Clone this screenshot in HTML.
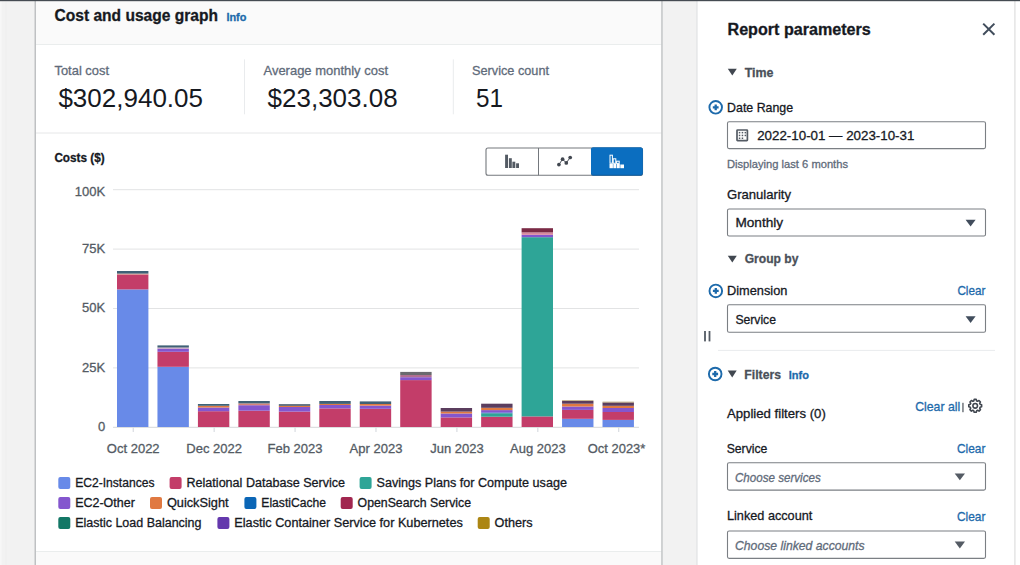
<!DOCTYPE html>
<html><head><meta charset="utf-8"><title>Cost and usage graph</title>
<style>
html,body{margin:0;padding:0;width:1020px;height:565px;overflow:hidden;background:#f2f2f2;}
svg{display:block;font-family:"Liberation Sans", sans-serif;}
</style></head><body>
<svg width="1020" height="565" viewBox="0 0 1020 565">
<rect x="0" y="0" width="1020" height="565" fill="#f2f2f2"/>
<rect x="0" y="0" width="1.5" height="565" fill="#f7f7f7"/>
<rect x="5.5" y="0" width="1" height="565" fill="#eeeeee"/>
<rect x="35" y="0" width="627" height="565" fill="#ffffff"/>
<rect x="35" y="0" width="627" height="45" fill="#fafafa"/>
<line x1="35" y1="44.5" x2="662" y2="44.5" stroke="#eaeded" stroke-width="1"/>
<line x1="35" y1="133" x2="662" y2="133" stroke="#e6e7e8" stroke-width="1"/>
<rect x="35" y="552" width="627" height="13" fill="#fafafa"/>
<line x1="35" y1="551.5" x2="662" y2="551.5" stroke="#eaeded" stroke-width="1"/>
<rect x="34.5" y="0" width="1.5" height="565" fill="#bfc1c3"/>
<rect x="661.2" y="0" width="1.5" height="565" fill="#c4c6c8"/>
<rect x="697" y="0" width="323" height="565" fill="#ffffff"/>
<rect x="696.5" y="0" width="1" height="565" fill="#dcdedf"/>
<rect x="1014.3" y="0" width="1.2" height="565" fill="#dedede"/>
<rect x="0" y="0" width="1020" height="1.2" fill="#454b52"/>
<text x="54.5" y="20.8" font-size="16" fill="#16191f" stroke="#16191f" stroke-width="0.3" font-weight="700" textLength="163.5" lengthAdjust="spacingAndGlyphs">Cost and usage graph</text>
<text x="226.4" y="21" font-size="11.5" fill="#1d6aab" stroke="#1d6aab" stroke-width="0.3" font-weight="700" textLength="20" lengthAdjust="spacingAndGlyphs">Info</text>
<text x="54.5" y="74.5" font-size="13" fill="#5f6b7a" stroke="#5f6b7a" stroke-width="0.3" textLength="54.5" lengthAdjust="spacingAndGlyphs">Total cost</text>
<text x="58.4" y="107" font-size="26" fill="#16191f" textLength="144.6" lengthAdjust="spacingAndGlyphs">$302,940.05</text>
<line x1="244.5" y1="59.4" x2="244.5" y2="114.3" stroke="#e9ebed" stroke-width="1"/>
<text x="263.5" y="74.5" font-size="13" fill="#5f6b7a" stroke="#5f6b7a" stroke-width="0.3" textLength="124.5" lengthAdjust="spacingAndGlyphs">Average monthly cost</text>
<text x="267.6" y="107" font-size="26" fill="#16191f" textLength="130" lengthAdjust="spacingAndGlyphs">$23,303.08</text>
<line x1="453.3" y1="59.4" x2="453.3" y2="114.3" stroke="#e9ebed" stroke-width="1"/>
<text x="472" y="74.5" font-size="13" fill="#5f6b7a" stroke="#5f6b7a" stroke-width="0.3" textLength="77" lengthAdjust="spacingAndGlyphs">Service count</text>
<text x="476" y="107" font-size="26" fill="#16191f" textLength="27" lengthAdjust="spacingAndGlyphs">51</text>
<text x="54.4" y="161.8" font-size="12.5" fill="#16191f" stroke="#16191f" stroke-width="0.3" font-weight="700" textLength="50.2" lengthAdjust="spacingAndGlyphs">Costs ($)</text>
<rect x="486" y="148" width="156.5" height="27.3" fill="#ffffff" rx="2" stroke="#74787d" stroke-width="1.1"/>
<rect x="591" y="147.5" width="51.7" height="28.3" fill="#0a5a9c" rx="2"/>
<rect x="591" y="147.5" width="51.7" height="27.3" fill="#0b6ec0" rx="2"/>
<line x1="538.5" y1="148" x2="538.5" y2="175.3" stroke="#74787d" stroke-width="1"/>
<rect x="505.1" y="154.7" width="2.9" height="13.300000000000011" fill="#545b64"/>
<rect x="508.9" y="158.2" width="2.9" height="9.800000000000011" fill="#545b64"/>
<rect x="512.4" y="161.7" width="2.9" height="6.300000000000011" fill="#545b64"/>
<rect x="516.1" y="163.3" width="2.9" height="4.699999999999989" fill="#545b64"/>
<polyline points="558.9,164.6 562.6,159.2 566.3,162.9 570.2,157.5" fill="none" stroke="#414750" stroke-width="0.95"/>
<circle cx="558.9" cy="164.6" r="1.85" fill="#414750"/>
<circle cx="562.6" cy="159.2" r="1.85" fill="#414750"/>
<circle cx="566.3" cy="162.9" r="1.85" fill="#414750"/>
<circle cx="570.2" cy="157.5" r="1.85" fill="#414750"/>
<g fill="none" stroke="#ffffff" stroke-width="1"><rect x="610" y="155.2" width="2.4" height="8"/><rect x="613.2" y="158.8" width="2.6" height="4.5"/><rect x="616.6" y="161.2" width="2.6" height="2.2"/></g>
<g fill="#ffffff"><rect x="609.5" y="163.8" width="3.4" height="4.4"/><rect x="613.3" y="163.8" width="3.0" height="4.4"/><rect x="616.8" y="163.8" width="3.0" height="4.4"/><rect x="620.3" y="164.5" width="3.7" height="3.7"/></g>
<line x1="113" y1="189.7" x2="639" y2="189.7" stroke="#e2e3e4" stroke-width="1"/>
<line x1="113" y1="249.1" x2="639" y2="249.1" stroke="#e2e3e4" stroke-width="1"/>
<line x1="113" y1="308.5" x2="639" y2="308.5" stroke="#e2e3e4" stroke-width="1"/>
<line x1="113" y1="367.9" x2="639" y2="367.9" stroke="#e2e3e4" stroke-width="1"/>
<line x1="113" y1="427.3" x2="639" y2="427.3" stroke="#d5d7d9" stroke-width="1"/>
<text x="105.2" y="196.2" font-size="13" fill="#545b64" stroke="#545b64" stroke-width="0.3" text-anchor="end">100K</text>
<text x="105.2" y="252.8" font-size="13" fill="#545b64" stroke="#545b64" stroke-width="0.3" text-anchor="end">75K</text>
<text x="105.2" y="312.2" font-size="13" fill="#545b64" stroke="#545b64" stroke-width="0.3" text-anchor="end">50K</text>
<text x="105.2" y="371.6" font-size="13" fill="#545b64" stroke="#545b64" stroke-width="0.3" text-anchor="end">25K</text>
<text x="105.2" y="431.0" font-size="13" fill="#545b64" stroke="#545b64" stroke-width="0.3" text-anchor="end">0</text>
<rect x="117.0" y="289.4" width="31.4" height="137.6" fill="#688ae8"/>
<rect x="117.0" y="274.5" width="31.4" height="14.9" fill="#c33d69"/>
<rect x="117.0" y="273.6" width="31.4" height="0.9" fill="#d98c7a"/>
<rect x="117.0" y="271" width="31.4" height="2.6" fill="#3f6176"/>
<rect x="157.46" y="366.8" width="31.4" height="60.2" fill="#688ae8"/>
<rect x="157.46" y="351.8" width="31.4" height="15.0" fill="#c33d69"/>
<rect x="157.46" y="348.6" width="31.4" height="3.2" fill="#8456ce"/>
<rect x="157.46" y="347.5" width="31.4" height="1.1" fill="#c9a0b8"/>
<rect x="157.46" y="345.4" width="31.4" height="2.1" fill="#3f6176"/>
<rect x="197.92" y="411.2" width="31.4" height="15.8" fill="#c33d69"/>
<rect x="197.92" y="407.5" width="31.4" height="3.7" fill="#8456ce"/>
<rect x="197.92" y="405.8" width="31.4" height="1.7" fill="#e07941"/>
<rect x="197.92" y="404" width="31.4" height="1.8" fill="#3f6176"/>
<rect x="238.38" y="410.7" width="31.4" height="16.3" fill="#c33d69"/>
<rect x="238.38" y="405.2" width="31.4" height="5.5" fill="#8456ce"/>
<rect x="238.38" y="403.4" width="31.4" height="1.8" fill="#d8847a"/>
<rect x="238.38" y="401" width="31.4" height="2.4" fill="#3f6176"/>
<rect x="278.84" y="411.6" width="31.4" height="15.4" fill="#c33d69"/>
<rect x="278.84" y="407.0" width="31.4" height="4.6" fill="#8456ce"/>
<rect x="278.84" y="405.8" width="31.4" height="1.2" fill="#e07941"/>
<rect x="278.84" y="404.2" width="31.4" height="1.6" fill="#44566a"/>
<rect x="319.3" y="408.4" width="31.4" height="18.6" fill="#c33d69"/>
<rect x="319.3" y="405.0" width="31.4" height="3.4" fill="#8456ce"/>
<rect x="319.3" y="403.9" width="31.4" height="1.1" fill="#e07941"/>
<rect x="319.3" y="401" width="31.4" height="2.9" fill="#3f6176"/>
<rect x="359.76" y="408.8" width="31.4" height="18.2" fill="#c33d69"/>
<rect x="359.76" y="405.6" width="31.4" height="3.2" fill="#8456ce"/>
<rect x="359.76" y="404.0" width="31.4" height="1.6" fill="#e07941"/>
<rect x="359.76" y="401.4" width="31.4" height="2.6" fill="#3f6176"/>
<rect x="400.22" y="380.1" width="31.4" height="46.9" fill="#c33d69"/>
<rect x="400.22" y="377.2" width="31.4" height="2.9" fill="#8456ce"/>
<rect x="400.22" y="375.0" width="31.4" height="2.2" fill="#b07090"/>
<rect x="400.22" y="371.9" width="31.4" height="3.1" fill="#6a6a6e"/>
<rect x="440.68" y="417.4" width="31.4" height="9.6" fill="#c33d69"/>
<rect x="440.68" y="413.5" width="31.4" height="3.9" fill="#8456ce"/>
<rect x="440.68" y="411.6" width="31.4" height="1.9" fill="#e07941"/>
<rect x="440.68" y="408" width="31.4" height="3.6" fill="#5b3d5e"/>
<rect x="481.14" y="416.7" width="31.4" height="10.3" fill="#c33d69"/>
<rect x="481.14" y="413.2" width="31.4" height="3.5" fill="#2ea597"/>
<rect x="481.14" y="412.2" width="31.4" height="1.0" fill="#6a70d6"/>
<rect x="481.14" y="410.1" width="31.4" height="2.1" fill="#8456ce"/>
<rect x="481.14" y="407.8" width="31.4" height="2.3" fill="#e07941"/>
<rect x="481.14" y="403.7" width="31.4" height="4.1" fill="#5b3d5e"/>
<rect x="521.6" y="416.4" width="31.4" height="10.6" fill="#c33d69"/>
<rect x="521.6" y="237.2" width="31.4" height="179.2" fill="#2ea597"/>
<rect x="521.6" y="234.8" width="31.4" height="2.4" fill="#8456ce"/>
<rect x="521.6" y="232.4" width="31.4" height="2.4" fill="#d9889e"/>
<rect x="521.6" y="228.2" width="31.4" height="4.2" fill="#7a2a45"/>
<rect x="562.06" y="418.8" width="31.4" height="8.2" fill="#688ae8"/>
<rect x="562.06" y="409.9" width="31.4" height="8.9" fill="#c33d69"/>
<rect x="562.06" y="406.5" width="31.4" height="3.4" fill="#8456ce"/>
<rect x="562.06" y="403.7" width="31.4" height="2.8" fill="#e07941"/>
<rect x="562.06" y="401.0" width="31.4" height="2.7" fill="#5b3d5e"/>
<rect x="562.06" y="400.3" width="31.4" height="0.7" fill="#b09a6a"/>
<rect x="602.52" y="419.9" width="31.4" height="7.1" fill="#688ae8"/>
<rect x="602.52" y="412.0" width="31.4" height="7.9" fill="#c33d69"/>
<rect x="602.52" y="408.0" width="31.4" height="4.0" fill="#8456ce"/>
<rect x="602.52" y="405.8" width="31.4" height="2.2" fill="#e07941"/>
<rect x="602.52" y="402.5" width="31.4" height="3.3" fill="#5b3d5e"/>
<rect x="602.52" y="401.7" width="31.4" height="0.8" fill="#b09a6a"/>
<line x1="133.23" y1="427.5" x2="133.23" y2="432" stroke="#d1d5db" stroke-width="1"/>
<line x1="214.15" y1="427.5" x2="214.15" y2="432" stroke="#d1d5db" stroke-width="1"/>
<line x1="295.07" y1="427.5" x2="295.07" y2="432" stroke="#d1d5db" stroke-width="1"/>
<line x1="375.99" y1="427.5" x2="375.99" y2="432" stroke="#d1d5db" stroke-width="1"/>
<line x1="456.91" y1="427.5" x2="456.91" y2="432" stroke="#d1d5db" stroke-width="1"/>
<line x1="537.83" y1="427.5" x2="537.83" y2="432" stroke="#d1d5db" stroke-width="1"/>
<line x1="618.75" y1="427.5" x2="618.75" y2="432" stroke="#d1d5db" stroke-width="1"/>
<text x="133.23" y="453" font-size="13" fill="#545b64" stroke="#545b64" stroke-width="0.3" text-anchor="middle">Oct 2022</text>
<text x="214.15" y="453" font-size="13" fill="#545b64" stroke="#545b64" stroke-width="0.3" text-anchor="middle">Dec 2022</text>
<text x="295.07" y="453" font-size="13" fill="#545b64" stroke="#545b64" stroke-width="0.3" text-anchor="middle">Feb 2023</text>
<text x="375.99" y="453" font-size="13" fill="#545b64" stroke="#545b64" stroke-width="0.3" text-anchor="middle">Apr 2023</text>
<text x="456.91" y="453" font-size="13" fill="#545b64" stroke="#545b64" stroke-width="0.3" text-anchor="middle">Jun 2023</text>
<text x="537.83" y="453" font-size="13" fill="#545b64" stroke="#545b64" stroke-width="0.3" text-anchor="middle">Aug 2023</text>
<text x="587.8" y="453" font-size="13" fill="#545b64" stroke="#545b64" stroke-width="0.3" textLength="57.5" lengthAdjust="spacingAndGlyphs">Oct 2023*</text>
<rect x="58.3" y="477" width="12" height="12" fill="#688ae8" rx="2"/>
<text x="75.19999999999999" y="487.2" font-size="12.5" fill="#16191f" stroke="#16191f" stroke-width="0.3" textLength="79.3" lengthAdjust="spacingAndGlyphs">EC2-Instances</text>
<rect x="169.6" y="477" width="12" height="12" fill="#c33d69" rx="2"/>
<text x="186.5" y="487.2" font-size="12.5" fill="#16191f" stroke="#16191f" stroke-width="0.3" textLength="158.6" lengthAdjust="spacingAndGlyphs">Relational Database Service</text>
<rect x="359.6" y="477" width="12" height="12" fill="#2ea597" rx="2"/>
<text x="376.5" y="487.2" font-size="12.5" fill="#16191f" stroke="#16191f" stroke-width="0.3" textLength="190.4" lengthAdjust="spacingAndGlyphs">Savings Plans for Compute usage</text>
<rect x="58.3" y="497" width="12" height="12" fill="#8456ce" rx="2"/>
<text x="75.19999999999999" y="507.2" font-size="12.5" fill="#16191f" stroke="#16191f" stroke-width="0.3" textLength="59.6" lengthAdjust="spacingAndGlyphs">EC2-Other</text>
<rect x="150.0" y="497" width="12" height="12" fill="#e07941" rx="2"/>
<text x="166.9" y="507.2" font-size="12.5" fill="#16191f" stroke="#16191f" stroke-width="0.3" textLength="61.7" lengthAdjust="spacingAndGlyphs">QuickSight</text>
<rect x="244.4" y="497" width="12" height="12" fill="#0b66b6" rx="2"/>
<text x="261.3" y="507.2" font-size="12.5" fill="#16191f" stroke="#16191f" stroke-width="0.3" textLength="64.7" lengthAdjust="spacingAndGlyphs">ElastiCache</text>
<rect x="340.7" y="497" width="12" height="12" fill="#a1264f" rx="2"/>
<text x="357.59999999999997" y="507.2" font-size="12.5" fill="#16191f" stroke="#16191f" stroke-width="0.3" textLength="113.4" lengthAdjust="spacingAndGlyphs">OpenSearch Service</text>
<rect x="58.3" y="517" width="12" height="12" fill="#137766" rx="2"/>
<text x="75.19999999999999" y="527.2" font-size="12.5" fill="#16191f" stroke="#16191f" stroke-width="0.3" textLength="126.3" lengthAdjust="spacingAndGlyphs">Elastic Load Balancing</text>
<rect x="217.4" y="517" width="12" height="12" fill="#6438ad" rx="2"/>
<text x="234.3" y="527.2" font-size="12.5" fill="#16191f" stroke="#16191f" stroke-width="0.3" textLength="228.5" lengthAdjust="spacingAndGlyphs">Elastic Container Service for Kubernetes</text>
<rect x="477.7" y="517" width="12" height="12" fill="#ac8614" rx="2"/>
<text x="494.59999999999997" y="527.2" font-size="12.5" fill="#16191f" stroke="#16191f" stroke-width="0.3" textLength="38" lengthAdjust="spacingAndGlyphs">Others</text>
<text x="727.5" y="35" font-size="16" fill="#16191f" stroke="#16191f" stroke-width="0.3" font-weight="700" textLength="143.3" lengthAdjust="spacingAndGlyphs">Report parameters</text>
<path d="M983.2 23.6 L994.4 34.8 M994.4 23.6 L983.2 34.8" stroke="#414d5c" stroke-width="2" fill="none"/>
<path d="M727.8 68.7 L736.8 68.7 L732.3 75.5 Z" fill="#414750"/>
<text x="744.7" y="76.6" font-size="13" fill="#4a5059" stroke="#4a5059" stroke-width="0.3" font-weight="700" textLength="28.8" lengthAdjust="spacingAndGlyphs">Time</text>
<circle cx="715.7" cy="107.3" r="6.3" fill="none" stroke="#1d6aab" stroke-width="1.9"/><path d="M712.80 107.3 L718.60 107.3 M715.7 104.40 L715.7 110.20" stroke="#1d6aab" stroke-width="2.3"/>
<text x="727.1" y="112.3" font-size="13" fill="#16191f" stroke="#16191f" stroke-width="0.3" textLength="66" lengthAdjust="spacingAndGlyphs">Date Range</text>
<rect x="727.5" y="121.7" width="258" height="26.89999999999999" fill="#ffffff" rx="1.6" stroke="#7b7f84" stroke-width="1.1"/>
<rect x="737" y="130" width="10.4" height="10.6" rx="0.6" fill="none" stroke="#545b64" stroke-width="1.7"/>
<g fill="#545b64"><rect x="738.8" y="131.9" width="1.5" height="1.5"/><rect x="741.6999999999999" y="131.9" width="1.5" height="1.5"/><rect x="744.5999999999999" y="131.9" width="1.5" height="1.5"/><rect x="738.8" y="134.70000000000002" width="1.5" height="1.5"/><rect x="741.6999999999999" y="134.70000000000002" width="1.5" height="1.5"/><rect x="744.5999999999999" y="134.70000000000002" width="1.5" height="1.5"/><rect x="738.8" y="137.5" width="1.5" height="1.5"/><rect x="741.6999999999999" y="137.5" width="1.5" height="1.5"/></g>
<text x="757.2" y="139.8" font-size="13.5" fill="#16191f" stroke="#16191f" stroke-width="0.3" textLength="157.2" lengthAdjust="spacingAndGlyphs">2022-10-01 — 2023-10-31</text>
<text x="727" y="168.0" font-size="11.3" fill="#5f6b7a" stroke="#5f6b7a" stroke-width="0.3" textLength="121" lengthAdjust="spacingAndGlyphs">Displaying last 6 months</text>
<text x="727" y="199" font-size="13" fill="#16191f" stroke="#16191f" stroke-width="0.3" textLength="64" lengthAdjust="spacingAndGlyphs">Granularity</text>
<rect x="727.5" y="209.0" width="258" height="27.0" fill="#ffffff" rx="1.6" stroke="#7b7f84" stroke-width="1.1"/>
<text x="735.4" y="227.3" font-size="13" fill="#16191f" stroke="#16191f" stroke-width="0.3" textLength="47.7" lengthAdjust="spacingAndGlyphs">Monthly</text>
<path d="M965.6 219.8 L975.6 219.8 L970.6 226.60000000000002 Z" fill="#414d5c"/>
<path d="M727.8 255.8 L736.8 255.8 L732.3 262.6 Z" fill="#414750"/>
<text x="744.7" y="263.3" font-size="13" fill="#4a5059" stroke="#4a5059" stroke-width="0.3" font-weight="700" textLength="53.8" lengthAdjust="spacingAndGlyphs">Group by</text>
<circle cx="715.8" cy="290.9" r="6.3" fill="none" stroke="#1d6aab" stroke-width="1.9"/><path d="M712.90 290.9 L718.70 290.9 M715.8 288.00 L715.8 293.80" stroke="#1d6aab" stroke-width="2.3"/>
<text x="727" y="295.3" font-size="13" fill="#16191f" stroke="#16191f" stroke-width="0.3" textLength="60.4" lengthAdjust="spacingAndGlyphs">Dimension</text>
<text x="957.4" y="295.3" font-size="13" fill="#1d6aab" stroke="#1d6aab" stroke-width="0.3" textLength="28" lengthAdjust="spacingAndGlyphs">Clear</text>
<rect x="727.5" y="304.8" width="258" height="27.5" fill="#ffffff" rx="1.6" stroke="#7b7f84" stroke-width="1.1"/>
<text x="735.4" y="323.6" font-size="13" fill="#16191f" stroke="#16191f" stroke-width="0.3" textLength="40.6" lengthAdjust="spacingAndGlyphs">Service</text>
<path d="M965.6 316.3 L975.6 316.3 L970.6 323.1 Z" fill="#414d5c"/>
<rect x="704.1" y="331" width="1.8" height="10.4" fill="#545b64"/>
<rect x="708.6" y="331" width="1.8" height="10.4" fill="#545b64"/>
<line x1="718" y1="350.4" x2="995" y2="350.4" stroke="#e9ebed" stroke-width="1"/>
<circle cx="715.2" cy="374" r="6.3" fill="none" stroke="#1d6aab" stroke-width="1.9"/><path d="M712.30 374 L718.10 374 M715.2 371.10 L715.2 376.90" stroke="#1d6aab" stroke-width="2.3"/>
<path d="M727.7 370.6 L736.7 370.6 L732.2 377.6 Z" fill="#414750"/>
<text x="744.3" y="379" font-size="13" fill="#4a5059" stroke="#4a5059" stroke-width="0.3" font-weight="700" textLength="36.7" lengthAdjust="spacingAndGlyphs">Filters</text>
<text x="788.8" y="379" font-size="11.5" fill="#1d6aab" stroke="#1d6aab" stroke-width="0.3" font-weight="700" textLength="20.2" lengthAdjust="spacingAndGlyphs">Info</text>
<text x="727" y="417.5" font-size="13" fill="#16191f" stroke="#16191f" stroke-width="0.3" textLength="98.8" lengthAdjust="spacingAndGlyphs">Applied filters (0)</text>
<text x="915.2" y="410.6" font-size="13" fill="#1d6aab" stroke="#1d6aab" stroke-width="0.3" textLength="45" lengthAdjust="spacingAndGlyphs">Clear all</text>
<rect x="962.3" y="402.8" width="1.3" height="9.4" fill="#5a6068"/>
<path d="M980.08,404.31 L981.62,404.78 L981.62,406.82 L980.08,407.29 L979.70,408.19 L980.46,409.62 L979.02,411.06 L977.59,410.30 L976.69,410.68 L976.22,412.22 L974.18,412.22 L973.71,410.68 L972.81,410.30 L971.38,411.06 L969.94,409.62 L970.70,408.19 L970.32,407.29 L968.78,406.82 L968.78,404.78 L970.32,404.31 L970.70,403.41 L969.94,401.98 L971.38,400.54 L972.81,401.30 L973.71,400.92 L974.18,399.38 L976.22,399.38 L976.69,400.92 L977.59,401.30 L979.02,400.54 L980.46,401.98 L979.70,403.41 Z" fill="none" stroke="#414750" stroke-width="1.6" stroke-linejoin="round"/>
<circle cx="975.2" cy="405.8" r="2.3" fill="none" stroke="#414750" stroke-width="1.6"/>
<text x="726.7" y="452.5" font-size="13" fill="#16191f" stroke="#16191f" stroke-width="0.3" textLength="40.7" lengthAdjust="spacingAndGlyphs">Service</text>
<text x="957" y="452.5" font-size="13" fill="#1d6aab" stroke="#1d6aab" stroke-width="0.3" textLength="28.4" lengthAdjust="spacingAndGlyphs">Clear</text>
<rect x="727.5" y="462.7" width="258" height="27.400000000000034" fill="#ffffff" rx="1.6" stroke="#7b7f84" stroke-width="1.1"/>
<text x="735" y="481.5" font-size="13" fill="#5f6b7a" stroke="#5f6b7a" stroke-width="0.3" font-style="italic" textLength="85.7" lengthAdjust="spacingAndGlyphs">Choose services</text>
<path d="M954.7 473.4 L965.0 473.4 L959.85 480.2 Z" fill="#545b64"/>
<text x="727" y="520.4" font-size="13" fill="#16191f" stroke="#16191f" stroke-width="0.3" textLength="85.3" lengthAdjust="spacingAndGlyphs">Linked account</text>
<text x="957" y="521" font-size="13" fill="#1d6aab" stroke="#1d6aab" stroke-width="0.3" textLength="28.4" lengthAdjust="spacingAndGlyphs">Clear</text>
<rect x="727.5" y="531.0" width="258" height="27.399999999999977" fill="#ffffff" rx="1.6" stroke="#7b7f84" stroke-width="1.1"/>
<text x="735" y="549.5" font-size="13" fill="#5f6b7a" stroke="#5f6b7a" stroke-width="0.3" font-style="italic" textLength="129.6" lengthAdjust="spacingAndGlyphs">Choose linked accounts</text>
<path d="M954.7 541.6 L965.0 541.6 L959.85 548.4 Z" fill="#545b64"/>
</svg>
</body></html>
